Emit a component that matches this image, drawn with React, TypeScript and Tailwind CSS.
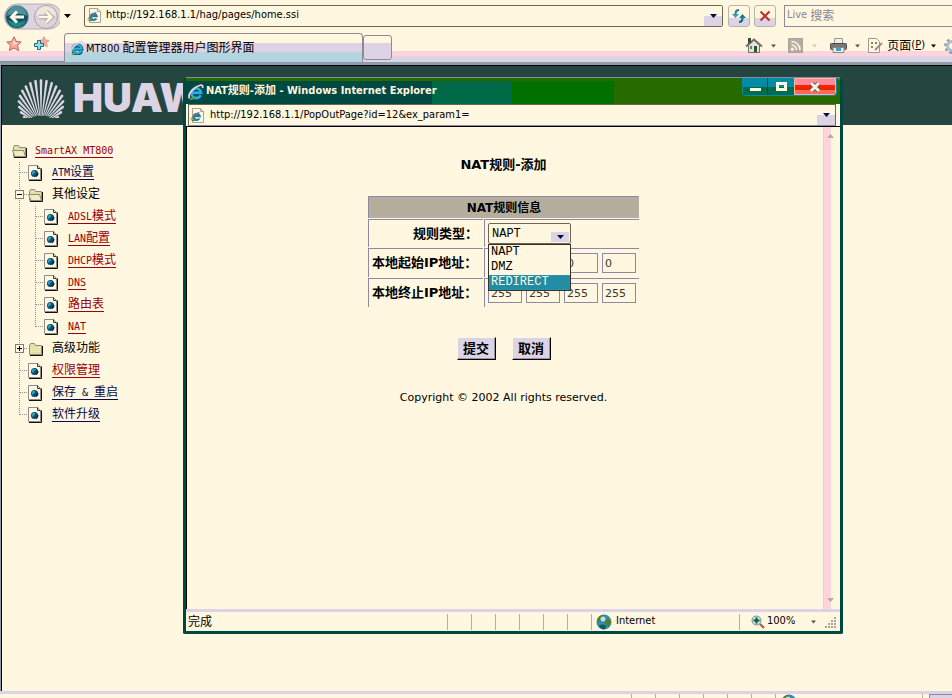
import type { ReactNode } from "react";

const ui = "font-['DejaVu_Sans_Condensed','DejaVu_Sans','Noto_Sans_CJK_SC',sans-serif]";
const verdana = "font-['DejaVu_Sans','Noto_Sans_CJK_SC',sans-serif]";
const mono = "font-['Liberation_Mono','Noto_Sans_CJK_SC',monospace]";

function Caret({ className = "" }: { className?: string }) {
  return (
    <svg className={className} width="7" height="4" viewBox="0 0 7 4" fill="currentColor" aria-hidden="true">
      <path d="M0 0h7L3.5 4z" />
    </svg>
  );
}

function IeMark({ size = 14 }: { size?: number }) {
  return (
    <svg width={size} height={size} viewBox="0 0 16 16" fill="none" aria-hidden="true">
      <path d="M13 11.500A5 5 0 1 1 13.300 9H4.500" stroke="#06567c" strokeWidth="4" />
      <path d="M12.600 11.200A4.800 4.800 0 1 1 13 8.800H4.600" stroke="#27b3e0" strokeWidth="2.400" />
      <path d="M1.600 14.400C-1 11 5 3.500 11.500 1.500c3-.9 3.800.5 2.800 2.500" stroke="#f0cdd0" strokeWidth="1.800" />
      <path d="M2 15c2 .4 4-1 5.500-2.400" stroke="#6c9b28" strokeWidth="1.800" />
    </svg>
  );
}

function IePage() {
  return (
    <svg width="15" height="17" viewBox="0 0 15 17" fill="none" aria-hidden="true">
      <path d="M2.500 1.500h8l3 3v11h-11z" fill="#fff7df" stroke="#a9a496" />
      <path d="M10.500 1.500v3h3" stroke="#a9a496" />
      <path d="M9.300 11.500A3.100 3.100 0 1 1 9.700 9.200H4" stroke="#177fa8" strokeWidth="2.200" />
      <path d="M1.200 13.500C0 12 4.500 6.500 9.500 5.300" stroke="#d2644a" />
      <path d="M2 13.600c2 0 3-.6 4-1.400" stroke="#4d8a1c" strokeWidth="1.500" />
    </svg>
  );
}

function NavArrows() {
  return (
    <svg width="56" height="28" viewBox="0 0 56 28" fill="none" aria-hidden="true">
      <path d="M13 2h32a12 12 0 0 1 0 25H13A12 12 0 0 1 13 2z" fill="#ddd4e0" stroke="#b7aebc" />
      <circle cx="13" cy="15" r="11.500" fill="#174f63" stroke="#8ea6a4" />
      <path d="M3 14a10 10 0 0 1 20 0c-5-3-14-3-20 0z" fill="#4d939c" />
      <path d="M4 18c5 3 13 3 18 0-1 4-4 7-9 7s-8-3-9-7z" fill="#168e83" />
      <path d="M20 15H8M13 9.500 7.500 15l5.500 5.500" stroke="#fff8e8" strokeWidth="3" />
      <circle cx="42" cy="15" r="11.500" fill="#dcd6d8" stroke="#a7a19f" />
      <path d="M32 14a10 10 0 0 1 20 0c-5-2-14-2-20 0z" fill="#efe6dc" />
      <path d="M35 15h12M42 9.500l5.500 5.500-5.500 5.500" stroke="#a7a0a0" strokeWidth="4.400" />
      <path d="M35 15h12M42 9.500l5.500 5.500-5.500 5.500" stroke="#fff8e8" strokeWidth="2.600" />
    </svg>
  );
}

function Star({ add = false }: { add?: boolean }) {
  const star = "M8 .8l2.200 4.600 5 .6-3.700 3.400 1.100 5.200L8 12 3.400 14.600l1.100-5.200L.8 6l5-.6z";
  return (
    <svg width="17" height="16" viewBox="0 0 17 16" fill="none" aria-hidden="true">
      <path d={star} fill="#fba79c" stroke={add ? "#cf958c" : "#b9655e"} transform={add ? "translate(5 0) scale(.74)" : undefined} />
      {!add && <path d="M8 3l1.500 3.500 3.500.3-6.500 2.700z" fill="#ffd7cc" />}
      {add && <path d="M4.500 4.500h3v3h3v3h-3v3h-3v-3h-3v-3h3z" fill="#8fe0e4" stroke="#186e86" />}
    </svg>
  );
}

function Huawei() {
  const petals = Array.from({ length: 19 }, (_, i) => {
    const a = ((i - 9) / 9) * 1.13;
    const at = (r: number, w: number) => {
      const x = 24 + Math.sin(a) * r + Math.cos(a) * w;
      const y = 47 - Math.cos(a) * r + Math.sin(a) * w;
      return `${x.toFixed(2)} ${y.toFixed(2)}`;
    };
    const tip = 45 * Math.cos(a);
    const base = 9 + Math.abs(a) * 3;
    return `M${at(base, -0.4)}L${at(tip, -1.3)}L${at(tip + 1, 0)}L${at(tip, 1.3)}L${at(base, 0.4)}z`;
  });
  return (
    <svg width="48" height="40" viewBox="0 0 48 40" fill="#dcd4e2" aria-hidden="true">
      {petals.map((d) => (
        <path key={d} d={d} />
      ))}
    </svg>
  );
}

function Folder({ open = false }: { open?: boolean }) {
  return (
    <svg width="16" height="16" viewBox="0 0 16 16" fill="none" aria-hidden="true">
      <path d="M1.500 13.500v-9l1-2h4l1 2h6v9z" fill="#e4dfa4" stroke="#8d8a83" />
      <path d="M2 14.500h12.500V5" stroke="#111" />
      {open ? (
        <path d="M.5 7.500h11l2 6H3z" fill="#f2ecc0" stroke="#8d8a83" />
      ) : (
        <path d="M3 6.500h10M3 8.500h10M3 10.500h10" stroke="#f8f2cf" strokeDasharray="1 1" />
      )}
    </svg>
  );
}

function PageIcon() {
  return (
    <svg width="14" height="16" viewBox="0 0 14 16" fill="none" aria-hidden="true">
      <path d="M.5.5h9l3 3v11H.5z" fill="#fff8e2" stroke="#8e8b88" />
      <path d="M9.500.5v3h3" stroke="#333" />
      <path d="M1 15.500h12.500V3.500" stroke="#111" />
      <circle cx="6.500" cy="8.500" r="3.500" fill="#0a4770" />
      <path d="M4 7c1-1.600 3-1.600 3.500-.6S6 8 5.500 9.500 3.500 8.500 4 7z" fill="#25a1b5" />
      <path d="M8 11.500c1.500-.5 2-2 2-3.500" stroke="#001018" />
    </svg>
  );
}

type Kind = "line" | "tee" | "end";

function Guide({ kind }: { kind: Kind }) {
  return (
    <svg className="shrink-0" width="16" height="22" viewBox="0 0 16 22" stroke="#908c88" strokeDasharray="1 1" aria-hidden="true">
      <path d={kind === "end" ? "M7.500 0v11" : "M7.500 0v22"} />
      {kind !== "line" && <path d="M8 10.500h8" />}
    </svg>
  );
}

function Toggle({ open }: { open: boolean }) {
  return (
    <button className="h-[22px] w-4 shrink-0" aria-label={open ? "折叠" : "展开"}>
      <svg width="16" height="22" viewBox="0 0 16 22" fill="none" aria-hidden="true">
        <path d="M7.500 0v22" stroke="#908c88" strokeDasharray="1 1" />
        <path d="M12 10.500h4" stroke="#908c88" strokeDasharray="1 1" />
        <rect x="3.500" y="6.500" width="8" height="8" fill="#fff7df" stroke="#807c80" />
        <path d={open ? "M5 10.500h5" : "M5 10.500h5M7.500 8v5"} stroke="#000" />
      </svg>
    </button>
  );
}

const red = "border-[#98000a] text-[#98000a]";
const navy = "border-[#080848] text-[#080848]";

function TreeLink({ tone, children }: { tone: string; children: ReactNode }) {
  return (
    <a href="#" className={`flex h-[14px] items-center border-b leading-[14px] ${tone}`}>
      {children}
    </a>
  );
}

function L({ children }: { children: ReactNode }) {
  return <span className="font-['DejaVu_Sans_Mono',monospace] text-[10px] whitespace-pre">{children}</span>;
}

function Leaf({ kind, depth = 1, tone, children }: { kind: Kind; depth?: number; tone: string; children: ReactNode }) {
  return (
    <li className="flex h-[22px] items-center">
      {depth === 2 && <Guide kind="line" />}
      <Guide kind={kind} />
      <span className="w-6 shrink-0">
        <PageIcon />
      </span>
      <TreeLink tone={tone}>{children}</TreeLink>
    </li>
  );
}

function Tree() {
  return (
    <nav className={`w-[181px] shrink-0 pt-[15px] pl-[10px] text-[12px] ${mono}`}>
      <ul>
        <li className="flex h-[22px] items-center gap-[7px]">
          <Folder open />
          <TreeLink tone={red}>
            <L>SmartAX MT800</L>
          </TreeLink>
        </li>
        <Leaf kind="tee" tone={navy}>
          <L>ATM</L>设置
        </Leaf>
        <li className="flex h-[22px] items-center">
          <Toggle open />
          <span className="w-6 shrink-0">
            <Folder open />
          </span>
          其他设定
        </li>
        <Leaf depth={2} kind="tee" tone={red}>
          <L>ADSL</L>模式
        </Leaf>
        <Leaf depth={2} kind="tee" tone={red}>
          <L>LAN</L>配置
        </Leaf>
        <Leaf depth={2} kind="tee" tone={red}>
          <L>DHCP</L>模式
        </Leaf>
        <Leaf depth={2} kind="tee" tone={red}>
          <L>DNS</L>
        </Leaf>
        <Leaf depth={2} kind="tee" tone={red}>
          路由表
        </Leaf>
        <Leaf depth={2} kind="end" tone={red}>
          <L>NAT</L>
        </Leaf>
        <li className="flex h-[22px] items-center">
          <Toggle open={false} />
          <span className="w-6 shrink-0">
            <Folder />
          </span>
          高级功能
        </li>
        <Leaf kind="tee" tone={red}>
          权限管理
        </Leaf>
        <Leaf kind="tee" tone={navy}>
          保存<L> &amp; </L>重启
        </Leaf>
        <Leaf kind="end" tone={navy}>
          软件升级
        </Leaf>
      </ul>
    </nav>
  );
}

function Toolbar() {
  return (
    <div className="flex h-[31px] items-center pl-1">
      <button aria-label="后退 / 前进">
        <NavArrows />
      </button>
      <button className="ml-1" aria-label="历史记录">
        <Caret />
      </button>
      <div className="ml-[13px] flex h-[22px] min-w-0 flex-1 items-center rounded-[2px] border border-[#6d6752] pl-[2px]">
        <IePage />
        <input aria-label="地址" defaultValue="http://192.168.1.1/hag/pages/home.ssi" className="ml-1 min-w-0 flex-1 bg-transparent outline-none" />
        <button aria-label="展开地址" className="flex h-5 w-[18px] items-center justify-center bg-linear-to-b from-[#fff7df] from-50% to-[#dcd4e4] to-50% text-[#080848]">
          <Caret />
        </button>
      </div>
      <button aria-label="刷新" className="ml-[5px] flex h-[22px] w-[22px] items-center justify-center rounded-[3px] border border-[#b9b3a4] bg-linear-to-b from-[#fff7df] from-60% to-[#dcd4e4] to-60%">
        <svg width="16" height="16" viewBox="0 0 16 16" fill="none" aria-hidden="true">
          <path d="M8 2C5.500 2 4.500 4 4.500 6" stroke="#227d9a" strokeWidth="2" />
          <path d="M1 6h7l-3.500 4z" fill="#2b9dbd" />
          <path d="M8 14c2.500 0 3.500-2 3.500-4" stroke="#0a6a70" strokeWidth="2" />
          <path d="M8 10h7l-3.500-4z" fill="#107f88" />
        </svg>
      </button>
      <button aria-label="停止" className="ml-1 flex h-[22px] w-[22px] items-center justify-center rounded-[3px] border border-[#b9b3a4] bg-linear-to-b from-[#fff7df] from-60% to-[#dcd4e4] to-60%">
        <svg width="12" height="12" viewBox="0 0 12 12" aria-hidden="true">
          <path d="M1.500 1.500l9 9M10.500 1.500l-9 9" stroke="#b8382c" strokeWidth="2.200" />
        </svg>
      </button>
      <div className="ml-2 flex h-[22px] w-[168px] items-center border border-r-0 border-[#8e8898] pl-[2px] text-[#8a8694]">
        Live&nbsp;<span className="text-[12px]">搜索</span>
      </div>
    </div>
  );
}

function TabRow() {
  return (
    <div className="flex h-[31px]">
      <div className="flex w-[64px] items-center gap-[10px] border-b border-[#8e8898] bg-[linear-gradient(#fff7df_20px,#ffd4dc_20px,#ffd4dc_25px,#dcd4e4_25px)] pb-1 pl-[6px]">
        <button aria-label="收藏中心"><Star /></button>
        <button aria-label="添加到收藏夹"><Star add /></button>
      </div>
      <div className="mt-[2px] flex w-[299px] items-center rounded-t-[4px] border border-b-0 border-[#8e8898] bg-[linear-gradient(#fff7df_9px,#dcd4e4_9px,#dcd4e4_18px,#b4d4e0_18px)] pl-[5px]">
        <IeMark />
        <span className="ml-[2px] whitespace-nowrap">
          MT800 <span className="text-[12px]">配置管理器用户图形界面</span>
        </span>
      </div>
      <div className="flex min-w-0 flex-1 bg-[linear-gradient(#fff7df_20px,#ffd4dc_20px,#ffd4dc_25px,#dcd4e4_25px)]">
        <div className="mt-1 mb-[2px] w-[29px] shrink-0 rounded-[3px] border border-[#8e8898] bg-[linear-gradient(#fff7df_7px,#dcd4e4_7px)]" />
        <div className="flex min-w-0 flex-1 items-center justify-end overflow-hidden pb-[2px]">
          <button aria-label="主页" className="flex items-center gap-2 text-[#555550]">
            <svg width="18" height="17" viewBox="0 0 18 17" fill="none" aria-hidden="true">
              <path d="M3.500 8v7.500h11V8L9 3z" fill="#e6e2dc" stroke="#6c6b65" />
              <path d="M1 9.500 9 2.500l8 7" stroke="#716f6a" strokeWidth="2" />
              <path d="M3 1h3v4L3 7z" fill="#3c4a32" />
              <rect x="9" y="9" width="3" height="6" fill="#275a28" />
              <rect x="5" y="9" width="2" height="3" fill="#5f7d92" />
            </svg>
            <Caret className="w-[5px]" />
          </button>
          <button aria-label="订阅源" className="ml-[12px] flex items-center gap-[9px] text-[#d4cbb0]">
            <svg width="15" height="15" viewBox="0 0 15 15" fill="none" stroke="#fff7df" strokeWidth="1.600" aria-hidden="true">
              <rect x=".5" y=".5" width="14" height="14" fill="#b3afa6" stroke="#aaa69d" />
              <path d="M3.500 7a5 5 0 0 1 5 5M3.500 3.500a8.500 8.500 0 0 1 8.500 8.500" />
              <circle cx="4.300" cy="11.200" r=".8" />
            </svg>
            <Caret className="w-[5px]" />
          </button>
          <button aria-label="打印" className="ml-[13px] flex items-center gap-2 text-[#555550]">
            <svg width="17" height="17" viewBox="0 0 17 17" fill="none" aria-hidden="true">
              <path d="M4.500 1.500h8V7h-8z" fill="#f1eee4" stroke="#9b978d" />
              <rect x=".5" y="6.500" width="16" height="6" rx="1" fill="#76797a" stroke="#4a4c4c" />
              <path d="M3 10.500h11v5H3z" fill="#f0ecdf" stroke="#8b877c" />
              <path d="M6 11h5v3H6z" fill="#39a2cb" />
            </svg>
            <Caret className="w-[5px]" />
          </button>
          <button className="ml-[7px] flex items-center whitespace-nowrap">
            <svg width="17" height="17" viewBox="0 0 17 17" fill="none" aria-hidden="true">
              <path d="M1.500 1.500h8l3 3v11h-11z" fill="#fff9e8" stroke="#9b978d" />
              <path d="M4 6h2M4 10h2M8 6h2" stroke="#8a9030" strokeWidth="2" />
              <path d="m8 13 7-7" stroke="#a9849c" strokeWidth="2" />
            </svg>
            <span className="ml-[3px] text-[12px]">页面</span>(<u>P</u>)
            <Caret className="ml-[6px] w-[5px]" />
          </button>
          <button aria-label="工具" className="ml-2 w-[8px] overflow-hidden">
            <svg width="16" height="16" viewBox="0 0 16 16" fill="none" aria-hidden="true">
              <circle cx="8" cy="8" r="4.500" fill="#fff7df" stroke="#a9c0d0" strokeWidth="3" />
              <circle cx="8" cy="8" r="6.800" stroke="#8298ac" strokeWidth="2" strokeDasharray="2.700 2.600" />
            </svg>
          </button>
        </div>
      </div>
    </div>
  );
}

function IpRow({ id, label, values }: { id: string; label: string; values: string[] }) {
  return (
    <tr className="h-[29px]">
      <th scope="row" id={id} className="border-t border-l border-[#8e88a4] p-0 pl-[3px] text-left whitespace-nowrap">
        {label}
      </th>
      <td className="border-t border-l border-[#8e88a4] p-0 pl-[3px]">
        <div className="flex gap-1">
          {values.map((v, i) => (
            <input
              key={i}
              aria-labelledby={id}
              defaultValue={v}
              className="h-5 w-[34px] border border-[#8e88a4] bg-transparent pl-[2px] text-[11px] text-[#383830] outline-none"
            />
          ))}
        </div>
      </td>
    </tr>
  );
}

function RuleForm() {
  const options = ["NAPT", "DMZ", "REDIRECT"];
  return (
    <form className={`flex min-w-0 flex-1 flex-col items-center pt-7 pr-[3px] text-[13px] ${verdana}`}>
      <h1 className="h-5 leading-5 font-bold">NAT规则-添加</h1>
      <table className="mt-[20px] w-[273px] table-fixed border-separate border-spacing-[1px] leading-4">
        <colgroup>
          <col className="w-[115px]" />
          <col />
        </colgroup>
        <thead>
          <tr className="h-[22px]">
            <th colSpan={2} className="border-t border-l border-[#8e88a4] bg-[#b6ae9c] p-0 text-center text-[12px]">
              NAT规则信息
            </th>
          </tr>
        </thead>
        <tbody>
          <tr className="h-[28px]">
            <th scope="row" className="border-t border-l border-[#8e88a4] p-0 pr-[5px] text-right">
              <label htmlFor="rule">规则类型：</label>
            </th>
            <td className="border-t border-l border-[#8e88a4] p-0 pl-[3px]">
              <div className={`relative w-[83px] text-[12px] ${mono}`}>
                <select id="rule" defaultValue="NAPT" className="block h-[21px] w-full appearance-none rounded-[2px] border border-[#6d6752] bg-[#fff7df] pl-[3px] outline-none">
                  {options.map((o) => (
                    <option key={o}>{o}</option>
                  ))}
                </select>
                <span className="pointer-events-none absolute right-[2px] bottom-[2px] flex h-[10px] w-[18px] items-center justify-center bg-[#dcd4e4] text-[#080848]">
                  <Caret />
                </span>
                <ul role="listbox" aria-label="规则类型" className="absolute top-[21px] left-0 z-10 w-full border border-[#33332b] bg-[#fff7df] leading-[15px]">
                  {options.map((o) => (
                    <li
                      key={o}
                      role="option"
                      aria-selected={o === "REDIRECT"}
                      className="h-[15px] pl-[2px] aria-selected:bg-[#218ca4] aria-selected:text-[#fff7df] aria-selected:outline aria-selected:-outline-offset-1 aria-selected:outline-dotted aria-selected:outline-[#a07850]"
                    >
                      {o}
                    </li>
                  ))}
                </ul>
              </div>
            </td>
          </tr>
          <IpRow id="start" label="本地起始IP地址：" values={["0", "0", "0", "0"]} />
          <IpRow id="end" label="本地终止IP地址：" values={["255", "255", "255", "255"]} />
        </tbody>
      </table>
      <div className="mt-[29px] flex gap-4">
        {["提交", "取消"].map((t) => (
          <button
            key={t}
            type="button"
            className="h-[23px] w-[39px] border border-t-[#fff7df] border-r-black border-b-black border-l-[#fff7df] bg-[#dcd4e4] font-bold shadow-[inset_-1px_-1px_#9c94a4]"
          >
            {t}
          </button>
        ))}
      </div>
      <p className="mt-[30px] text-[11px] leading-4">Copyright © 2002 All rights reserved.</p>
    </form>
  );
}

function Globe() {
  return (
    <svg width="16" height="16" viewBox="0 0 16 16" aria-hidden="true">
      <circle cx="8" cy="8" r="7.500" fill="#2b8fb4" />
      <path d="M2 4c2-3 5-3 6-2.500S7 5 5.500 6 3 8 1 7.500C.8 6 1.500 5 2 4zM9 6c2-1.500 4-1 6 1 0 2-1 4-3 5-2-1-4-4-3-6z" fill="#5f7a1e" />
      <path d="M3 12c2-2 5-2 7 0 0 1 0 2-2 3.500-2 0-4-1.500-5-3.500z" fill="#185c50" />
      <circle cx="7" cy="5" r="2.500" fill="#b5e3ee" />
    </svg>
  );
}

function Popup() {
  return (
    <section
      aria-label="NAT规则-添加"
      className="absolute top-[77px] left-[183px] flex h-[557px] w-[660px] flex-col rounded-t-[5px] rounded-b-[2px] border-x-[3px] border-t border-b-[3px] border-x-[#004842] border-t-[#8e88a4] border-b-[#004842] bg-[#fff7df]"
    >
      <header className="flex h-[26px] shrink-0 items-start rounded-t-[3px] bg-[linear-gradient(90deg,#004842_246px,#006a48_246px,#006a48_326px,#007000_326px,#007000_428px,#266a00_428px)]">
        <div className="flex h-[24px] flex-1 items-center border-t-[3px] border-[#266a00] pl-[2px] font-bold text-[#fff7df]">
          <IeMark size={16} />
          <span className="ml-[2px] whitespace-nowrap">NAT规则-添加 - Windows Internet Explorer</span>
        </div>
        <div className="mr-[3px] flex h-[18px] overflow-hidden rounded-b-[4px] border border-t-0 border-[#008ca4] bg-[#00684e]">
          <button aria-label="最小化" className="flex w-[25px] items-end justify-center border-r border-[#004842] bg-[linear-gradient(#008ca4_9px,#006c4e_9px)] pb-1">
            <span className="h-[3px] w-[11px] bg-[#fff7df]" />
          </button>
          <button aria-label="最大化" className="flex w-[26px] items-center justify-center bg-[linear-gradient(#008ca4_9px,#006c4e_9px)]">
            <span className="h-[9px] w-[11px] border-[3px] border-[#fff7df]" />
          </button>
          <button aria-label="关闭" className="flex w-[42px] items-center justify-center border border-[#ffb4a0] bg-[linear-gradient(#ff8c98_6px,#ff2000_6px,#e42400_11px,#ff6a50_11px)]">
            <svg width="12" height="10" viewBox="0 0 12 10" fill="none" aria-hidden="true">
              <path d="M2 1l8 8M10 1 2 9" stroke="#6a4a48" strokeWidth="4.600" />
              <path d="M2 1l8 8M10 1 2 9" stroke="#f4f0ea" strokeWidth="3" />
            </svg>
          </button>
        </div>
      </header>
      <div className="mr-1 ml-[2px] flex h-[22px] shrink-0 items-center border border-[#6d6752] border-b-[#8e88a4] pl-[1px]">
        <IePage />
        <input aria-label="地址" readOnly defaultValue="http://192.168.1.1/PopOutPage?id=12&ex_param1=" className="ml-[5px] min-w-0 flex-1 bg-transparent outline-none" />
        <button aria-label="展开地址" className="flex h-5 w-[18px] items-center justify-center bg-linear-to-b from-[#fff7df] from-50% to-[#dcd4e4] to-50% text-[#080848]">
          <Caret />
        </button>
      </div>
      <div className="flex min-h-0 flex-1 border-t border-l border-black">
        <RuleForm />
        <div className="mr-[2px] flex w-[15px] flex-col items-center justify-between border-l border-[#dcd4e4] bg-[linear-gradient(90deg,#ffd4dc_7px,#fff7df_7px)] py-[7px] pr-[2px] text-[#b6ae9c]">
          <Caret className="rotate-180" />
          <Caret />
        </div>
      </div>
      <footer className="flex h-[22px] shrink-0 items-center border-t-[3px] border-[#dcd4e4]">
        <span className="flex-1 pl-[2px] text-[12px]">完成</span>
        {[0, 1, 2, 3, 4, 5].map((i) => (
          <span key={i} className="h-4 w-6 border-l border-[#b6ae9c]" />
        ))}
        <span className="flex h-4 w-[148px] items-center gap-1 border-l border-[#b6ae9c] pl-1">
          <Globe />
          Internet
        </span>
        <button className="flex h-4 w-[101px] items-center border-l border-[#b6ae9c] pl-[11px]">
          <svg width="14" height="14" viewBox="0 0 14 14" fill="none" aria-hidden="true">
            <path d="m9 9 4 4" stroke="#9a6b4a" strokeWidth="2.400" />
            <circle cx="5.500" cy="5.500" r="4.500" fill="#c8e6e4" stroke="#6f8d9a" />
            <path d="M5.500 2.500v6M2.500 5.500h6" stroke="#0d5a35" strokeWidth="2" />
          </svg>
          <span className="ml-[2px]">100%</span>
          <Caret className="ml-auto w-[5px] text-[#555550]" />
          <svg className="mr-[3px] ml-[9px]" width="12" height="12" viewBox="0 0 12 12" stroke="#aaa49c" strokeWidth="2" strokeDasharray="2 1" aria-hidden="true">
            <path d="M0 11h12M3 8h9M6 5h6M9 2h3" />
          </svg>
        </button>
      </footer>
    </section>
  );
}

export default function App() {
  return (
    <div className={`relative flex h-screen flex-col overflow-hidden bg-[#fff7df] text-[11px] text-black ${ui}`}>
      <Toolbar />
      <TabRow />
      <main className="flex min-h-0 flex-1 flex-col border-t-[3px] border-l border-[#8e9cac]">
        <div className="flex min-h-0 flex-1 flex-col border-t border-l border-black">
          <div className="flex h-[59px] shrink-0 items-center bg-[#254640] pt-1 pl-[15px]">
            <Huawei />
            <span className="ml-[8px] w-[110px] overflow-hidden font-['Inter',sans-serif] text-[40px] leading-none font-black text-[#dcd4e4]">
              HUAWEI
            </span>
          </div>
          <Tree />
        </div>
      </main>
      <footer className="flex h-[7px] shrink-0 border-t-[3px] border-[#dcd4e4]">
        <span className="flex-1" />
        {[0, 1, 2, 3, 4, 5].map((i) => (
          <span key={i} className="w-6 border-l border-[#b6ae9c]" />
        ))}
        <span className="w-[147px] overflow-hidden border-l border-[#b6ae9c] pl-[5px]">
          <Globe />
        </span>
        <span className="w-[7px] border-l border-[#b6ae9c]" />
        <span className="w-[23px] border-t border-l border-[#8e88a4] bg-[#dcd4e4]" />
      </footer>
      <Popup />
    </div>
  );
}
